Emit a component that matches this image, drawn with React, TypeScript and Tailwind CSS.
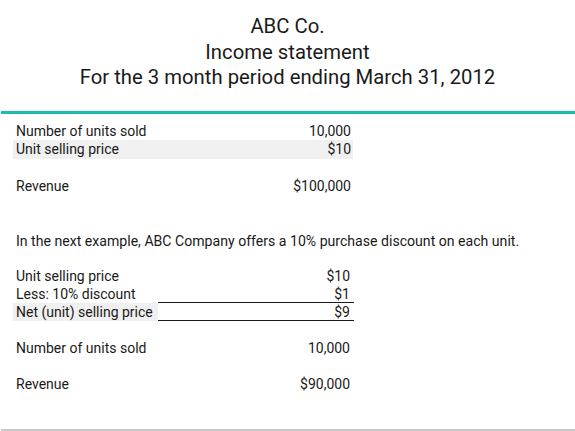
import React from "react";

const font = { fontFamily: "Roboto, 'Liberation Sans', sans-serif" };

export default function App() {
  return (
    <div className="w-[575px] h-[431px] bg-white text-[#1a1a1a] flex flex-col overflow-hidden" style={font}>
      <div className="pt-[14px] flex flex-col items-center text-[20.3px] leading-[25.5px]">
        <div>ABC Co.</div>
        <div>Income statement</div>
        <div>For the 3 month period ending March 31, 2012</div>
      </div>
      <div className="mt-[20px] ml-[1px] h-[3px] bg-[#1cbcb2]" />
      <div className="pl-[13px] pt-[8px] text-[14px] leading-[18px]">
        <div className="w-[340px] flex justify-between pl-[3px] pr-[2px]">
          <span>Number of units sold</span>
          <span>10,000</span>
        </div>
        <div className="w-[340px] flex justify-between pl-[3px] pr-[2px] bg-[#f0f0f0] h-[19px]">
          <span>Unit selling price</span>
          <span>$10</span>
        </div>
        <div className="w-[340px] flex justify-between pl-[3px] pr-[2px] mt-[18px]">
          <span>Revenue</span>
          <span>$100,000</span>
        </div>
        <div className="pl-[3px] mt-[37px] text-[14.1px]">
          In the next example, ABC Company offers a 10% purchase discount on each unit.
        </div>
        <div className="mt-[17px] w-[341px] grid grid-cols-[145px_196px]">
          <div className="pl-[3px]">Unit selling price</div>
          <div className="text-right pr-[4px]">$10</div>
          <div className="pl-[3px] h-[18px]">Less: 10% discount</div>
          <div className="text-right pr-[4px] h-[18px] border-b border-[#1a1a1a]">$1</div>
          <div className="pl-[3px] bg-[#f0f0f0] h-[18px]">Net (unit) selling price</div>
          <div className="text-right pr-[4px] h-[18px] border-b border-[#1a1a1a]">$9</div>
        </div>
        <div className="w-[341px] flex justify-between pl-[3px] pr-[4px] mt-[18px]">
          <span>Number of units sold</span>
          <span>10,000</span>
        </div>
        <div className="w-[341px] flex justify-between pl-[3px] pr-[4px] mt-[18px]">
          <span>Revenue</span>
          <span>$90,000</span>
        </div>
      </div>
      <div className="mt-auto ml-[1px] h-[2px] bg-[#c8c8c8]" />
    </div>
  );
}
